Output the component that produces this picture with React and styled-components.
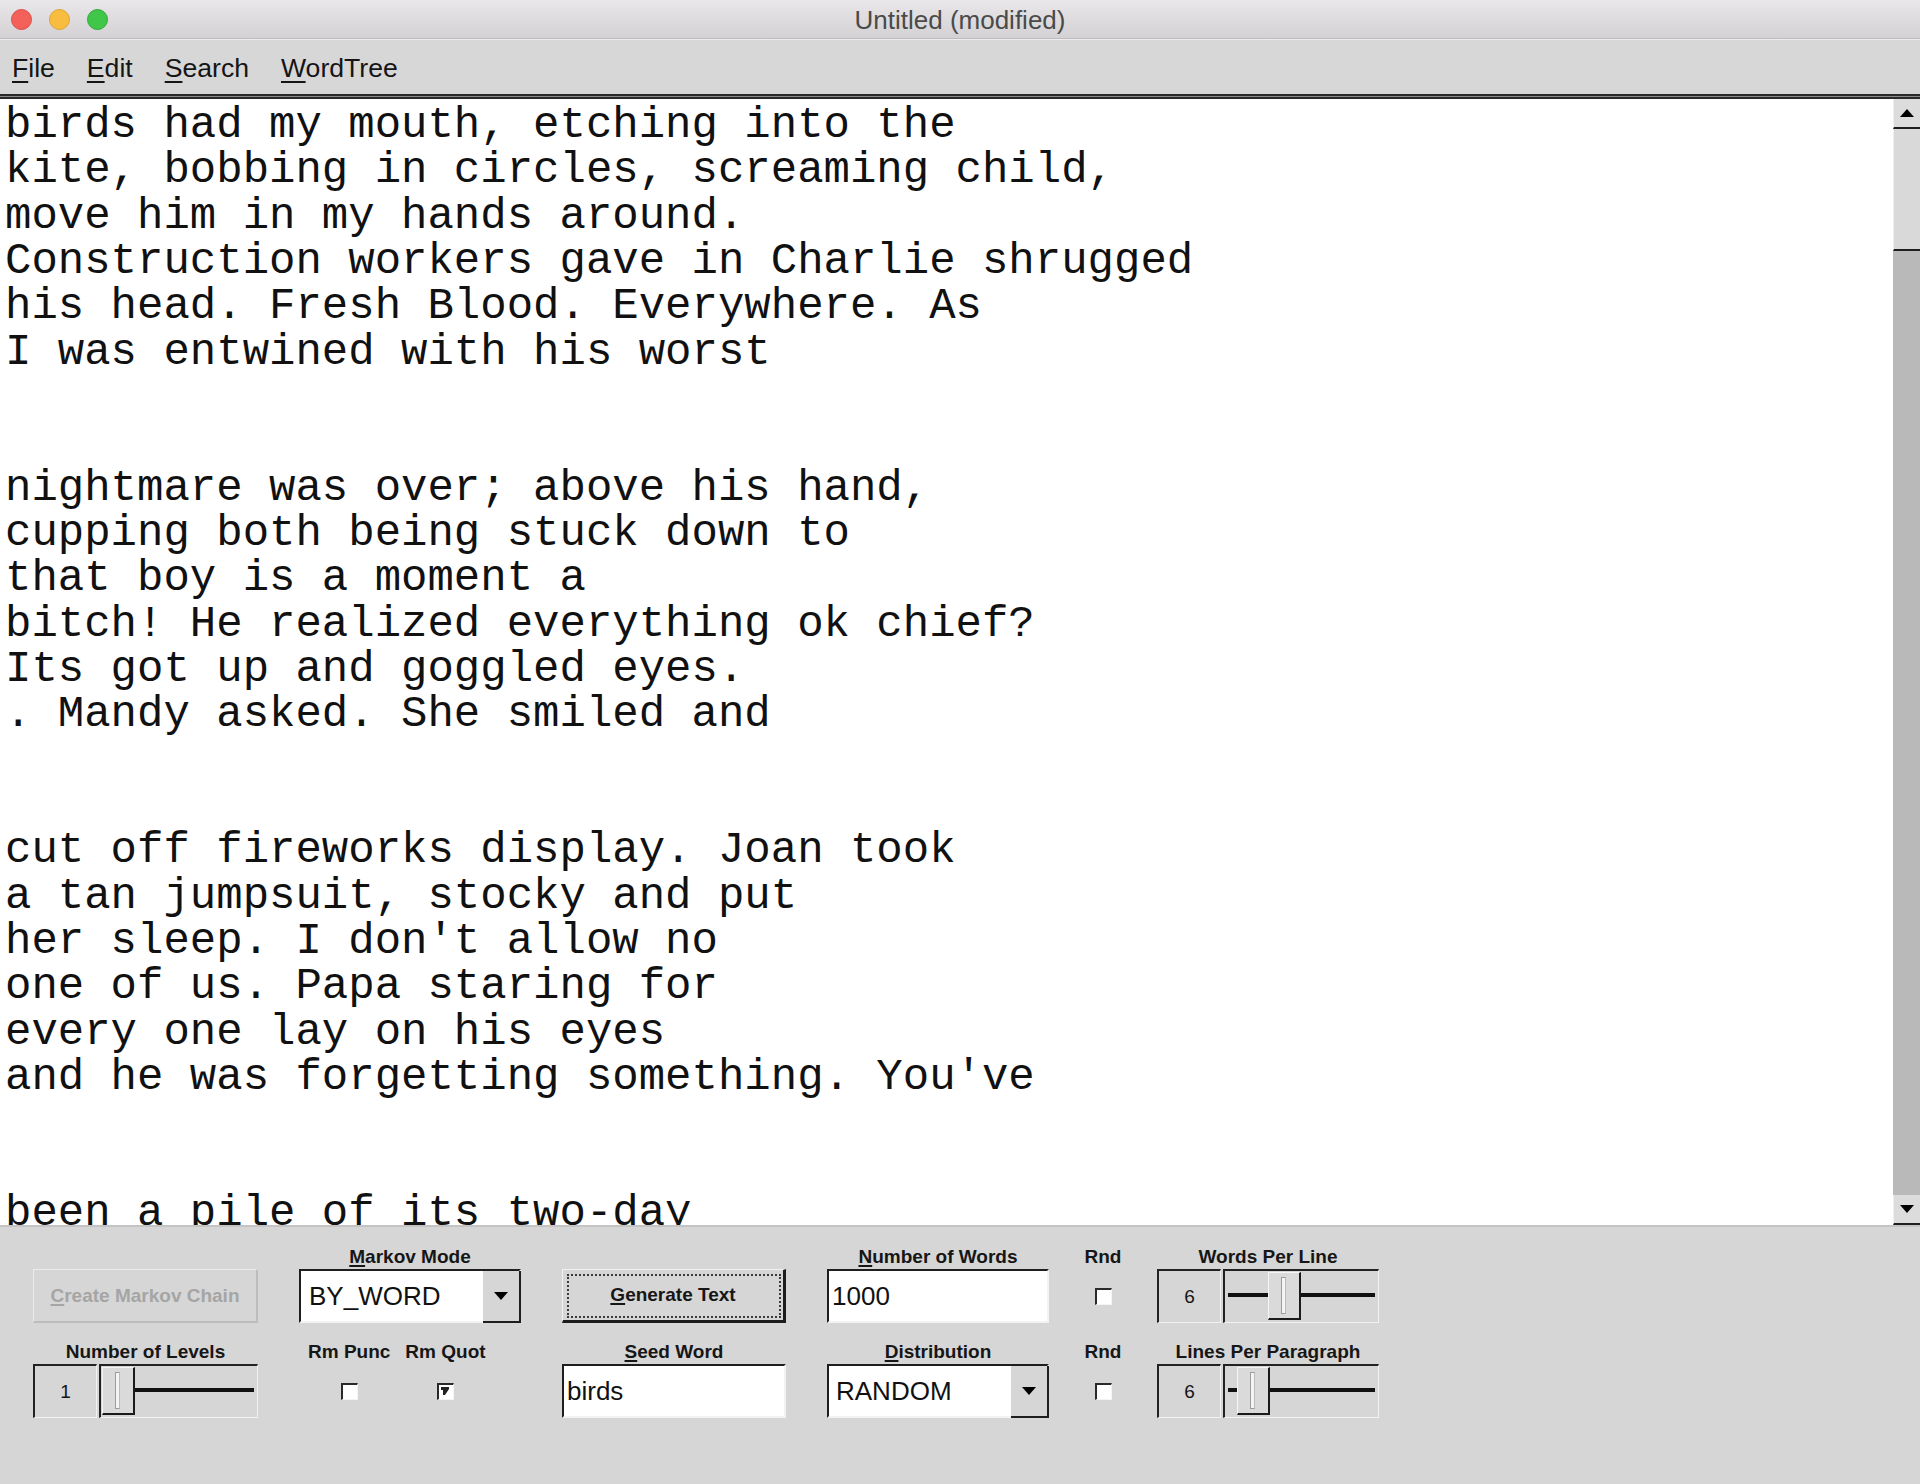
import React from 'react'
import styled, { createGlobalStyle } from 'styled-components'

const GlobalStyle = createGlobalStyle`
    html, body {
        margin: 0;
        padding: 0;
    }
    body {
        background: #d6d6d6;
        font-family: "Liberation Sans", Arial, sans-serif;
    }
`

const Window = styled.div`
    display: flex;
    flex-direction: column;
    width: 1920px;
    height: 1484px;
    overflow: hidden;
    background: #d6d6d6;
`

const TitleBar = styled.div`
    display: grid;
    grid-template-columns: 1fr auto 1fr;
    align-items: center;
    height: 38px;
    padding: 0 11px;
    background: linear-gradient(#e9e7e9, #d3d1d3);
    border-bottom: 1px solid #bdbbbd;
`

const Lights = styled.div`
    display: flex;
    gap: 17px;
`

const Light = styled.span`
    width: 21px;
    height: 21px;
    border-radius: 50%;
    box-sizing: border-box;
    background: ${({ color }) => color};
    border: 1px solid ${({ edge }) => edge};
`

const Title = styled.div`
    padding-top: 2px;
    font-size: 26px;
    color: #4a4a4a;
    white-space: nowrap;
`

const MenuBar = styled.div`
    display: flex;
    align-items: center;
    gap: 32px;
    height: 55px;
    padding: 2px 0 0 12px;
    box-sizing: border-box;
    background: #d7d7d7;
    border-top: 1px solid #ededed;
`

const MenuItem = styled.div`
    font-size: 26.6px;
    color: #151515;
    u {
        text-decoration-thickness: 2px;
        text-underline-offset: 4px;
    }
`

const Separator = styled.div`
    height: 1px;
    background: #8a8a8a;
    border-top: 2px solid #2a2a2a;
    border-bottom: 2px solid #2a2a2a;
`

const Editor = styled.div`
    display: flex;
    height: 1126px;
    border-bottom: 2px solid #c4c4c4;
    background: #fff;
`

const TextPane = styled.div`
    flex: 1;
    overflow: hidden;
`

const Pre = styled.pre`
    margin: 0;
    padding: 4px 0 0 5px;
    font-family: "Liberation Mono", "Courier New", monospace;
    font-size: 44px;
    line-height: 45.33px;
    color: #111;
`

const ScrollBar = styled.div`
    display: flex;
    flex-direction: column;
    width: 27px;
    background: #bababa;
`

const ScrollButton = styled.div`
    display: flex;
    align-items: center;
    justify-content: center;
    height: ${({ h }) => h}px;
    background: #dcdcdc;
    border-bottom: 2px solid #1e1e1e;
    border-left: 1px solid #efefef;
`

const ScrollThumb = styled.div`
    height: 120px;
    background: #d9d9d9;
    border-bottom: 2px solid #1e1e1e;
    border-left: 1px solid #efefef;
`

const ScrollTrack = styled.div`
    flex: 1;
    background: #b9b9b9;
`

const Panel = styled.div`
    flex: 1;
    padding: 19px 0 0 33px;
`

const Grid = styled.div`
    display: grid;
    grid-template-columns: 225px 222px 224px 222px 26px 222px;
    column-gap: 41px;
    row-gap: 18px;
`

const Field = styled.div`
    display: flex;
    flex-direction: column;
    align-items: center;
    gap: 1px;
`

const Label = styled.div`
    height: 22px;
    line-height: 22px;
    font-size: 19px;
    font-weight: bold;
    color: #161616;
    white-space: nowrap;
    u {
        text-underline-offset: 2px;
        text-decoration-thickness: 2px;
    }
`

const Button = styled.div`
    box-sizing: border-box;
    display: flex;
    align-items: center;
    justify-content: center;
    width: 100%;
    height: 54px;
    margin-top: 23px;
    font-size: 19px;
    font-weight: bold;
    color: ${({ disabled }) => disabled ? '#a5a5a5' : '#161616'};
    background: #d6d6d6;
    border-style: solid;
    border-width: ${({ disabled }) => disabled ? '1px 2px 2px 1px' : '1px 3px 3px 1px'};
    border-color: ${({ disabled }) => disabled
        ? '#ececec #bdbdbd #bdbdbd #ececec'
        : '#f2f2f2 #1c1c1c #1c1c1c #f2f2f2'};
    outline: ${({ focused }) => focused ? '2px dotted #3a3a3a' : 'none'};
    outline-offset: -7px;
    u {
        text-underline-offset: 2px;
        text-decoration-thickness: 2px;
    }
`

const TextBox = styled.div`
    box-sizing: border-box;
    display: flex;
    align-items: center;
    width: 100%;
    height: 54px;
    background: #fff;
    border-style: solid;
    border-width: 2px;
    border-color: #1e1e1e #f3f3f3 #f3f3f3 #1e1e1e;
    font-size: 26px;
    color: #111;
`

const BoxText = styled.span`
    flex: 1;
    padding-left: ${({ pad }) => pad}px;
`

const ComboArrow = styled.div`
    display: flex;
    align-items: center;
    justify-content: center;
    width: 36px;
    align-self: stretch;
    background: #d6d6d6;
    border-right: 2px solid #1e1e1e;
    border-bottom: 2px solid #1e1e1e;
    margin: 0 -2px -2px 0;
`

const CheckCell = styled.div`
    display: flex;
    align-items: center;
    justify-content: center;
    height: 54px;
`

const Check = styled.div`
    box-sizing: border-box;
    display: flex;
    align-items: center;
    justify-content: center;
    width: 17px;
    height: 17px;
    background: #fff;
    border-style: solid;
    border-width: 2px 1px 1px 2px;
    border-color: #2a2a2a #f4f4f4 #f4f4f4 #2a2a2a;
`

const CheckPair = styled.div`
    display: flex;
    gap: 15px;
    padding-left: 9px;
`

const SliderRow = styled.div`
    display: flex;
    gap: 2px;
    width: 100%;
    height: 54px;
`

const Inset = styled.div`
    box-sizing: border-box;
    border-style: solid;
    border-width: 2px 1px 1px 2px;
    border-color: #222 #f2f2f2 #f2f2f2 #222;
`

const ValueBox = styled(Inset)`
    display: flex;
    align-items: center;
    justify-content: center;
    width: 64px;
    font-size: 19px;
    color: #151515;
`

const SliderBox = styled(Inset)`
    position: relative;
    flex: 1;
`

const Track = styled.div`
    position: absolute;
    left: 3px;
    right: 3px;
    top: 22px;
    height: 4px;
    background: #111;
`

const Thumb = styled.div`
    position: absolute;
    top: 1px;
    width: 33px;
    height: 48px;
    box-sizing: border-box;
    background: #dadada;
    border-style: solid;
    border-width: 1px 2px 2px 1px;
    border-color: #f5f5f5 #1a1a1a #1a1a1a #f5f5f5;
`

const Groove = styled.div`
    position: absolute;
    left: 12px;
    top: 4px;
    bottom: 4px;
    width: 3px;
    background: #f4f4f4;
    border: 1px solid #9c9c9c;
    border-right-color: #bcbcbc;
`

const Slider = ({ value, min, max }) => {
    const frac = (value - min) / (max - min)
    return (
        <SliderRow>
            <ValueBox>{value}</ValueBox>
            <SliderBox>
                <Track />
                <Thumb style={{ left: 1 + frac * 118 }}>
                    <Groove />
                </Thumb>
            </SliderBox>
        </SliderRow>
    )
}

const Arrow = ({ down, w = 14, h = 8 }) => (
    <svg width={w} height={h} viewBox="0 0 14 8">
        <polygon points={down ? '0,0 14,0 7,8' : '0,8 14,8 7,0'} fill="#000" />
    </svg>
)

const CheckBox = ({ checked }) => (
    <CheckCell>
        <Check>
            {checked &&
                <svg width="11" height="11" viewBox="0 0 11 11">
                    <path d="M1 1 L9 1 L9 3 L5 9 L3 9 L3 4 L1 4 Z" fill="#222" />
                </svg>
            }
        </Check>
    </CheckCell>
)

const text = `birds had my mouth, etching into the
kite, bobbing in circles, screaming child,
move him in my hands around.
Construction workers gave in Charlie shrugged
his head. Fresh Blood. Everywhere. As
I was entwined with his worst


nightmare was over; above his hand,
cupping both being stuck down to
that boy is a moment a
bitch! He realized everything ok chief?
Its got up and goggled eyes.
. Mandy asked. She smiled and


cut off fireworks display. Joan took
a tan jumpsuit, stocky and put
her sleep. I don't allow no
one of us. Papa staring for
every one lay on his eyes
and he was forgetting something. You've


been a pile of its two-day`

const App = () => {
    return (
        <>
            <GlobalStyle />
            <Window>
                <TitleBar>
                    <Lights>
                        <Light color="#f4605a" edge="#dc4c46" />
                        <Light color="#f8bd3e" edge="#dea332" />
                        <Light color="#40c74a" edge="#2ea83a" />
                    </Lights>
                    <Title>Untitled (modified)</Title>
                    <div />
                </TitleBar>
                <MenuBar>
                    <MenuItem><u>F</u>ile</MenuItem>
                    <MenuItem><u>E</u>dit</MenuItem>
                    <MenuItem><u>S</u>earch</MenuItem>
                    <MenuItem><u>W</u>ordTree</MenuItem>
                </MenuBar>
                <Separator />
                <Editor>
                    <TextPane>
                        <Pre>{text}</Pre>
                    </TextPane>
                    <ScrollBar>
                        <ScrollButton h={28}><Arrow /></ScrollButton>
                        <ScrollThumb />
                        <ScrollTrack />
                        <ScrollButton h={28}><Arrow down /></ScrollButton>
                    </ScrollBar>
                </Editor>
                <Panel>
                    <Grid>
                        <Field>
                            <Button disabled><span><u>C</u>reate Markov Chain</span></Button>
                        </Field>
                        <Field>
                            <Label><u>M</u>arkov Mode</Label>
                            <TextBox>
                                <BoxText pad={8}>BY_WORD</BoxText>
                                <ComboArrow><Arrow down /></ComboArrow>
                            </TextBox>
                        </Field>
                        <Field>
                            <Button focused><span><u>G</u>enerate Text</span></Button>
                        </Field>
                        <Field>
                            <Label><u>N</u>umber of Words</Label>
                            <TextBox><BoxText pad={3}>1000</BoxText></TextBox>
                        </Field>
                        <Field>
                            <Label>Rnd</Label>
                            <CheckBox />
                        </Field>
                        <Field>
                            <Label>Words Per Line</Label>
                            <Slider value={6} min={1} max={15} />
                        </Field>

                        <Field>
                            <Label>Number of Levels</Label>
                            <Slider value={1} min={1} max={10} />
                        </Field>
                        <CheckPair>
                            <Field>
                                <Label>Rm Punc</Label>
                                <CheckBox />
                            </Field>
                            <Field>
                                <Label>Rm Quot</Label>
                                <CheckBox checked />
                            </Field>
                        </CheckPair>
                        <Field>
                            <Label><u>S</u>eed Word</Label>
                            <TextBox><BoxText pad={3}>birds</BoxText></TextBox>
                        </Field>
                        <Field>
                            <Label><u>D</u>istribution</Label>
                            <TextBox>
                                <BoxText pad={7}>RANDOM</BoxText>
                                <ComboArrow><Arrow down /></ComboArrow>
                            </TextBox>
                        </Field>
                        <Field>
                            <Label>Rnd</Label>
                            <CheckBox />
                        </Field>
                        <Field>
                            <Label>Lines Per Paragraph</Label>
                            <Slider value={6} min={1} max={56} />
                        </Field>
                    </Grid>
                </Panel>
            </Window>
        </>
    )
}

export default App
